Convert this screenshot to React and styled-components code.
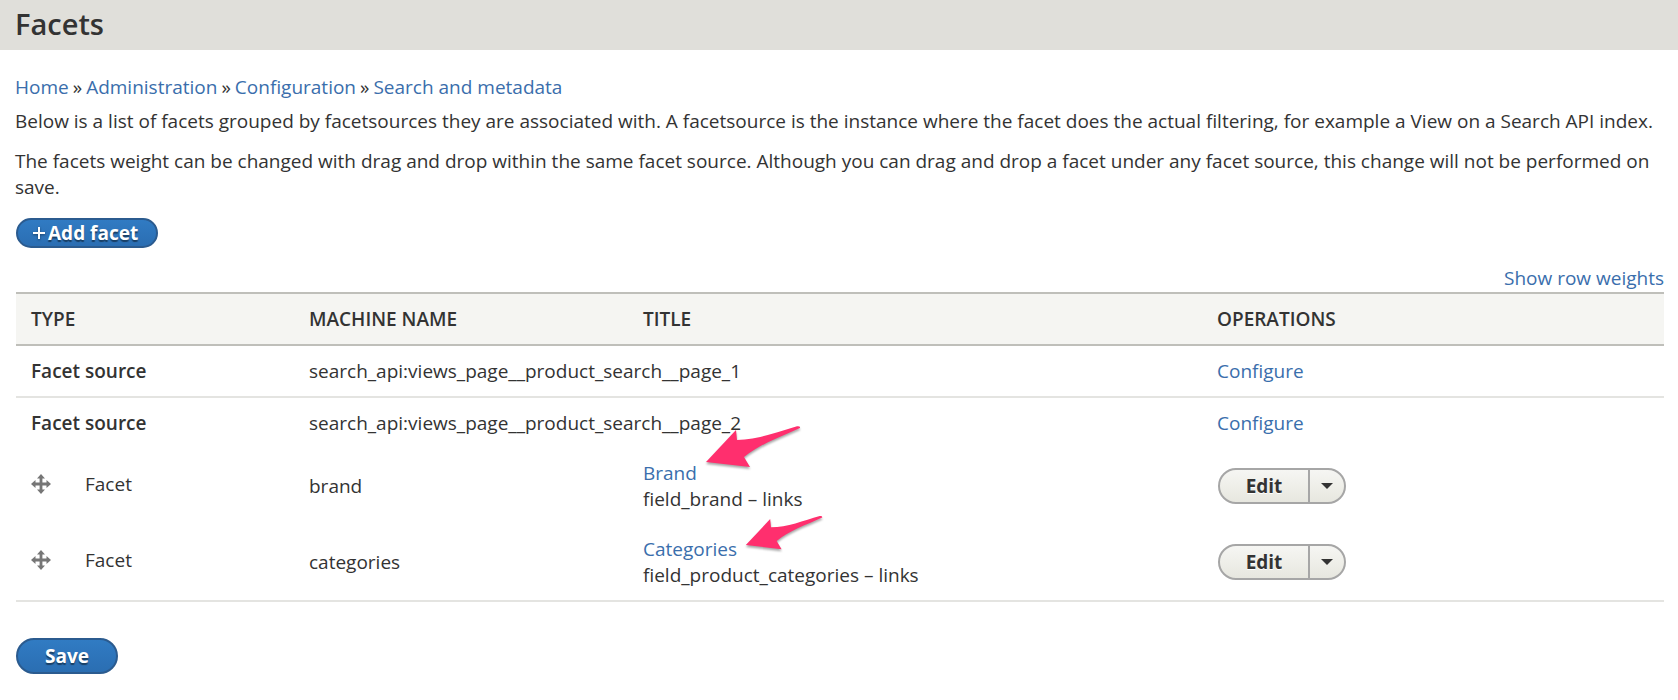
import React from 'react';
import styled, { createGlobalStyle, css } from 'styled-components';

const GlobalStyle = createGlobalStyle`
  *, *::before, *::after { box-sizing: border-box; }
  body {
    margin: 0;
    background: #fff;
    color: #333;
    font: 400 19px/26px "Open Sans", "Liberation Sans", sans-serif;
  }
`;

const PageHeader = styled.header`
  height: 50px;
  padding: 0 15px 3px;
  display: flex;
  align-items: center;
  background: #e0dfda;
`;

const PageTitle = styled.h1`
  margin: 0;
  font-size: 29px;
  line-height: 36px;
  font-weight: 600;
`;

const Content = styled.main`
  padding: 24px 14px 24px 16px;
`;

const Intro = styled.div`
  margin-left: -1px;
`;

const Link = styled.a`
  color: #3a6eac;
  text-decoration: none;
  &:hover { text-decoration: underline; }
`;

const BreadcrumbList = styled.ol`
  display: flex;
  margin: 0 0 8px;
  padding: 0;
  list-style: none;
`;

const BreadcrumbItem = styled.li`
  & + &::before {
    content: '»';
    padding: 0 4px;
  }
`;

const Paragraph = styled.p`
  margin: 0 0 14px;
`;

const primary = css`
  color: #fff;
  border: 2px solid #2b5b8f;
  background: linear-gradient(#317cc4, #2a6db1);
  background-origin: border-box;
  text-shadow: 0 2px 1px rgba(0, 0, 0, 0.45);
  font: inherit;
  font-weight: 700;
  cursor: pointer;
`;

const AddLink = styled.a`
  ${primary}
  display: inline-flex;
  align-items: center;
  gap: 3px;
  height: 30px;
  padding: 0 18px 0 15px;
  border-radius: 15px;
  text-decoration: none;
`;

const PlusIcon = styled.svg`
  width: 12px;
  height: 12px;
  filter: drop-shadow(0 1px 1px rgba(0, 0, 0, 0.4));
`;

const SaveButton = styled.button`
  ${primary}
  height: 36px;
  padding: 0 27px;
  border-radius: 18px;
`;

const Actions = styled.div`
  display: flex;
  padding-top: 4px;
`;

const WeightToggle = styled.div`
  display: flex;
  justify-content: flex-end;
  padding-top: 17px;
`;

const ToggleButton = styled.button`
  padding: 0;
  border: 0;
  background: none;
  font: inherit;
  color: #3a6eac;
  cursor: pointer;
`;

const Table = styled.table`
  width: 100%;
  table-layout: fixed;
  border-collapse: separate;
  border-spacing: 0;
  margin: 1px 0 36px;
`;

const Col = styled.col`
  width: ${(p) => p.$width}px;
`;

const HeadCell = styled.th`
  padding: 12px 15px;
  text-align: left;
  font-weight: 600;
  text-transform: uppercase;
  background: #f5f5f2;
  border-top: 2px solid #bfbfba;
  border-bottom: 2px solid #bfbfba;
`;

const Cell = styled.td`
  padding: ${(p) => (p.$compact ? '10px 15px 12px' : '12px 15px')};
  white-space: nowrap;
  border-bottom: 2px solid ${(p) => (p.$ruled ? '#e4e4e1' : '#fff')};
`;

const SourceLabel = styled.strong`
  font-weight: 600;
`;

const DragCell = styled.div`
  display: flex;
  align-items: center;
  gap: 34px;
  padding-bottom: 4px;
`;

const DragHandle = styled.a`
  display: flex;
  cursor: move;
`;

const TitleLine = styled.div`
  position: relative;
  width: fit-content;
`;

const Arrow = styled.svg`
  position: absolute;
  left: calc(100% + 8px);
  bottom: ${(p) => p.$bottom}px;
  width: ${(p) => p.$width}px;
  overflow: visible;
  pointer-events: none;
  filter: drop-shadow(0 2px 1px rgba(0, 0, 0, 0.35));
`;

const DropButton = styled.div`
  display: inline-flex;
  vertical-align: middle;
  height: 36px;
  margin-left: 1px;
  border: 2px solid #a6a6a6;
  border-radius: 18px;
  overflow: hidden;
  background: linear-gradient(#f6f6f3, #e7e7df);
`;

const DropAction = styled.button`
  width: ${(p) => (p.$toggle ? 36 : 88)}px;
  display: flex;
  align-items: center;
  justify-content: center;
  padding: 0;
  border: 0;
  border-left: ${(p) => (p.$toggle ? '2px solid #a6a6a6' : '0')};
  background: none;
  color: #333;
  font: inherit;
  font-weight: 700;
  text-shadow: 0 1px #fff;
  cursor: pointer;
`;

const crumbs = ['Home', 'Administration', 'Configuration', 'Search and metadata'];
const columnWidths = [278, 334, 574, 462];
const sources = [
  'search_api:views_page__product_search__page_1',
  'search_api:views_page__product_search__page_2',
];
const facets = [
  { name: 'brand', title: 'Brand', info: 'field_brand – links', arrow: { width: 96, bottom: 17 } },
  {
    name: 'categories',
    title: 'Categories',
    info: 'field_product_categories – links',
    arrow: { width: 78, bottom: 11 },
  },
];

function MoveIcon() {
  return (
    <svg width="20" height="20" viewBox="0 0 20 20" fill="#767676" aria-hidden="true">
      <path d="M10 0l4 4.500h-2.600v4.100h4.100V6L20 10l-4.500 4v-2.600h-4.100v4.100H14L10 20l-4-4.500h2.600v-4.100H4.500V14L0 10l4.500-4v2.600h4.100V4.500H6z" />
    </svg>
  );
}

function FacetRow({ facet, last }) {
  return (
    <tr>
      <Cell $compact $ruled={last}>
        <DragCell>
          <DragHandle href="#" aria-label={`Drag to re-order ${facet.title}`}>
            <MoveIcon />
          </DragHandle>
          Facet
        </DragCell>
      </Cell>
      <Cell $compact $ruled={last}>{facet.name}</Cell>
      <Cell $compact $ruled={last}>
        <TitleLine>
          <Link href="#">{facet.title}</Link>
          <Arrow
            $width={facet.arrow.width}
            $bottom={facet.arrow.bottom}
            viewBox="0 0 96 44"
            aria-hidden="true"
          >
            <path
              fill="#ff2f6e"
              d="M1 37L31 5L32 15C52 15 72 7 92 1.200Q95.500 .8 95 3C75 12 53 20 39 32L45 42Z"
            />
          </Arrow>
        </TitleLine>
        <div>{facet.info}</div>
      </Cell>
      <Cell $compact $ruled={last}>
        <DropButton>
          <DropAction type="button">Edit</DropAction>
          <DropAction type="button" $toggle aria-label="List additional actions">
            <svg width="12" height="6" viewBox="0 0 12 6" aria-hidden="true">
              <path d="M0 0h12L6 6z" fill="#333" />
            </svg>
          </DropAction>
        </DropButton>
      </Cell>
    </tr>
  );
}

export default function App() {
  return (
    <>
      <GlobalStyle />
      <PageHeader>
        <PageTitle>Facets</PageTitle>
      </PageHeader>
      <Content>
        <Intro>
          <nav aria-label="Breadcrumb">
            <BreadcrumbList>
              {crumbs.map((crumb) => (
                <BreadcrumbItem key={crumb}>
                  <Link href="#">{crumb}</Link>
                </BreadcrumbItem>
              ))}
            </BreadcrumbList>
          </nav>
          <Paragraph>
            Below is a list of facets grouped by facetsources they are associated with. A facetsource
            is the instance where the facet does the actual filtering, for example a View on a Search
            API index.
          </Paragraph>
          <Paragraph>
            The facets weight can be changed with drag and drop within the same facet source. Although
            you can drag and drop a facet under any facet source, this change will not be performed on
            save.
          </Paragraph>
        </Intro>
        <Actions>
          <AddLink href="#">
            <PlusIcon viewBox="0 0 12 12" aria-hidden="true">
              <path d="M6 0v12M0 6h12" stroke="#fff" strokeWidth="2" />
            </PlusIcon>
            Add facet
          </AddLink>
        </Actions>
        <WeightToggle>
          <ToggleButton type="button">Show row weights</ToggleButton>
        </WeightToggle>
        <Table>
          <colgroup>
            {columnWidths.map((width) => (
              <Col key={width} $width={width} />
            ))}
          </colgroup>
          <thead>
            <tr>
              <HeadCell scope="col">Type</HeadCell>
              <HeadCell scope="col">Machine name</HeadCell>
              <HeadCell scope="col">Title</HeadCell>
              <HeadCell scope="col">Operations</HeadCell>
            </tr>
          </thead>
          <tbody>
            {sources.map((source, i) => (
              <tr key={source}>
                <Cell $ruled={i === 0}>
                  <SourceLabel>Facet source</SourceLabel>
                </Cell>
                <Cell $ruled={i === 0} colSpan={2}>{source}</Cell>
                <Cell $ruled={i === 0}>
                  <Link href="#">Configure</Link>
                </Cell>
              </tr>
            ))}
            {facets.map((facet, i) => (
              <FacetRow key={facet.name} facet={facet} last={i === facets.length - 1} />
            ))}
          </tbody>
        </Table>
        <SaveButton type="button">Save</SaveButton>
      </Content>
    </>
  );
}
